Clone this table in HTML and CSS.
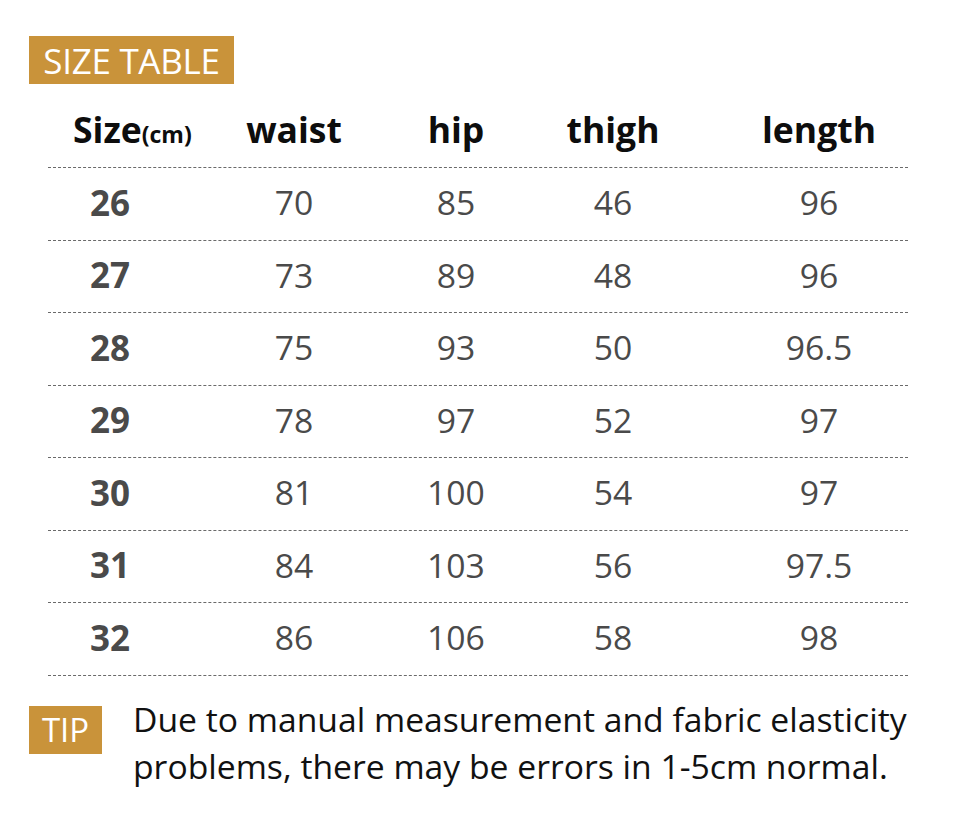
FILE: index.html
```html
<!DOCTYPE html>
<html>
<head>
<meta charset="utf-8">
<link rel="stylesheet" href="styles.css">
</head>
<body>
<div class="page">
  <div class="badge title">SIZE TABLE</div>
  <div class="table">
    <div class="row head">
      <div class="cell first">Size<span class="unit">(cm)</span></div>
      <div class="cell">waist</div>
      <div class="cell">hip</div>
      <div class="cell">thigh</div>
      <div class="cell">length</div>
    </div>
    <div class="row"><div class="cell sz">26</div><div class="cell">70</div><div class="cell">85</div><div class="cell">46</div><div class="cell">96</div></div>
    <div class="row"><div class="cell sz">27</div><div class="cell">73</div><div class="cell">89</div><div class="cell">48</div><div class="cell">96</div></div>
    <div class="row"><div class="cell sz">28</div><div class="cell">75</div><div class="cell">93</div><div class="cell">50</div><div class="cell">96.5</div></div>
    <div class="row"><div class="cell sz">29</div><div class="cell">78</div><div class="cell">97</div><div class="cell">52</div><div class="cell">97</div></div>
    <div class="row"><div class="cell sz">30</div><div class="cell">81</div><div class="cell">100</div><div class="cell">54</div><div class="cell">97</div></div>
    <div class="row"><div class="cell sz">31</div><div class="cell">84</div><div class="cell">103</div><div class="cell">56</div><div class="cell">97.5</div></div>
    <div class="row"><div class="cell sz">32</div><div class="cell">86</div><div class="cell">106</div><div class="cell">58</div><div class="cell">98</div></div>
  </div>
  <div class="tip">
    <div class="badge tipbadge">TIP</div>
    <p class="tiptext">Due to manual measurement and fabric elasticity problems, there may be errors in 1-5cm normal.</p>
  </div>
</div>
</body>
</html>
```
FILE: styles.css
```css
html, body {
  margin: 0;
  padding: 0;
  background: #fff;
}
body {
  font-family: "Open Sans", "Noto Sans", sans-serif;
  width: 960px;
  height: 825px;
  overflow: hidden;
}
.page {
  padding: 36px 0 0 29px;
}
.badge {
  background: #c9933a;
  color: #fff;
  display: flex;
  align-items: center;
  justify-content: center;
  font-weight: 400;
}
.title {
  width: 205px;
  height: 48px;
  font-size: 35px;
  letter-spacing: -0.3px;
}
.table {
  margin-left: 19px;
  width: 860px;
}
.row {
  display: grid;
  grid-template-columns: 124px 244px 80px 234px 178px;
  height: 72.5px;
  padding-bottom: 3px;
  border-bottom: 1px dashed #6a6a6a;
  box-sizing: border-box;
  align-items: center;
}
.row.head {
  height: 84px;
  padding-top: 6px;
  padding-bottom: 0;
}
.cell {
  text-align: center;
  font-size: 33.7px;
  color: #4a4a4a;
  white-space: nowrap;
}
.cell.sz {
  font-weight: 700;
  font-size: 35px;
}
.head .cell {
  font-weight: 700;
  font-size: 35.5px;
  color: #0d0d0d;
}
.head .cell.first {
  text-align: left;
  padding-left: 25px;
}
.unit {
  font-size: 23px;
}
.tip {
  display: flex;
  align-items: flex-start;
  margin-top: 30px;
}
.tipbadge {
  width: 73px;
  height: 48px;
  font-size: 33px;
  flex: none;
}
.tiptext {
  margin: -10px 0 0 31px;
  font-size: 33.7px;
  line-height: 47px;
  color: #111;
  width: 820px;
}
```
